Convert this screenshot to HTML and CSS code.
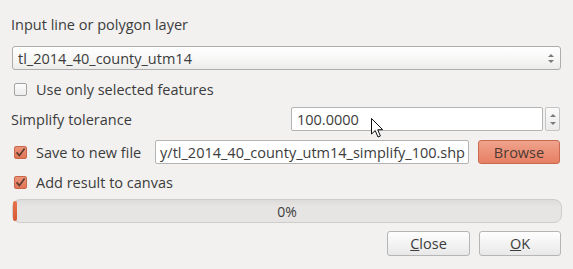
FILE: index.html
```html
<!DOCTYPE html>
<html>
<head>
<meta charset="utf-8">
<link rel="stylesheet" href="styles.css">
</head>
<body>
<div class="dialog">
  <div class="row label-row">Input line or polygon layer</div>
  <div class="combo">
    <span class="combo-text">tl_2014_40_county_utm14</span>
    <span class="arrows"><span class="up"></span><span class="down"></span></span>
  </div>
  <div class="row check-row r-use">
    <span class="cb"></span><span class="cb-label">Use only selected features</span>
  </div>
  <div class="row field-row r-tol">
    <span class="tol-label">Simplify tolerance</span>
    <div class="spin">
      <div class="spin-edit">100.0000</div>
      <div class="spin-btns"><span class="up"></span><span class="down"></span></div>
    </div>
  </div>
  <div class="row field-row r-save">
    <span class="cb checked"><svg viewBox="0 0 13 13" width="13" height="13"><path d="M2.6 6.4 L5.4 9.6 L10.6 2.6" fill="none" stroke="#5b3b31" stroke-width="1.6"/></svg></span>
    <span class="cb-label save-label">Save to new file</span>
    <div class="line-edit"><span class="path">y/tl_2014_40_county_utm14_simplify_100.shp</span></div>
    <button class="btn browse">Browse</button>
  </div>
  <div class="row check-row r-add">
    <span class="cb checked"><svg viewBox="0 0 13 13" width="13" height="13"><path d="M2.6 6.4 L5.4 9.6 L10.6 2.6" fill="none" stroke="#5b3b31" stroke-width="1.6"/></svg></span>
    <span class="cb-label">Add result to canvas</span>
  </div>
  <div class="progress"><span class="chunk"></span><span class="pct">0%</span></div>
  <div class="row buttons">
    <button class="btn plain close"><u>C</u>lose</button>
    <button class="btn plain ok"><u>O</u>K</button>
  </div>
</div>
<svg class="cursor" width="14" height="21" viewBox="0 0 14 21"><path d="M0.5 0.5 L0.5 16 L4.2 12.6 L7 19 L9.4 18 L6.7 11.8 L11.6 11.6 Z" fill="#fff" stroke="#111" stroke-width="1" stroke-linejoin="round"/></svg>
</body>
</html>
```
FILE: styles.css
```css
html, body {
  margin: 0;
  padding: 0;
  background: #f2f1f0;
}
body {
  width: 573px;
  height: 269px;
  position: relative;
  overflow: hidden;
  font-family: "Open Sans", "DejaVu Sans", sans-serif;
  font-size: 14.5px;
  color: #3c3c3c;
}
.dialog {
  display: flex;
  flex-direction: column;
  padding: 0 12px 0 11px;
}
.row {
  display: flex;
  align-items: center;
}
.label-row {
  height: 20px;
  margin-top: 14px;
}
.combo {
  margin-top: 12px;
  margin-left: 1px;
  height: 24px;
  box-sizing: border-box;
  border: 1px solid #adadad;
  border-radius: 3px;
  background: linear-gradient(#ffffff, #f6f6f5 60%, #ececeb);
  display: flex;
  align-items: center;
  padding: 0 6px 0 5px;
}
.combo-text {
  flex: 1;
}
.arrows, .spin-btns {
  display: flex;
  flex-direction: column;
  align-items: center;
  gap: 3px;
}
.up {
  width: 0;
  height: 0;
  border-left: 3px solid transparent;
  border-right: 3px solid transparent;
  border-bottom: 3px solid #7a7a7a;
}
.down {
  width: 0;
  height: 0;
  border-left: 3px solid transparent;
  border-right: 3px solid transparent;
  border-top: 3px solid #7a7a7a;
}
.check-row {
  height: 20px;
}
.r-use {
  margin-top: 9px;
}
.cb {
  width: 13px;
  height: 13px;
  box-sizing: border-box;
  border: 1px solid #a3a3a3;
  border-radius: 2px;
  background: linear-gradient(#fcfcfc, #ececec);
  margin-left: 3px;
  margin-right: 9px;
  flex-shrink: 0;
  display: flex;
}
.cb svg {
  display: block;
  margin: -1px;
}
.cb.checked {
  border-color: #c9674a;
  background: linear-gradient(#ec9479, #e07556);
}
.field-row {
  height: 24px;
}
.r-tol {
  margin-top: 8px;
}
.tol-label {
  flex: 1;
}
.spin {
  display: flex;
  height: 24px;
  gap: 2px;
}
.spin-edit {
  width: 252px;
  box-sizing: border-box;
  border: 1px solid #b4b4b4;
  border-radius: 2px;
  background: #ffffff;
  padding-left: 5px;
  display: flex;
  align-items: center;
}
.spin-btns {
  width: 15px;
  box-sizing: border-box;
  border: 1px solid #c4c4c4;
  border-radius: 2px;
  background: linear-gradient(#fafafa, #ebebeb);
  justify-content: center;
  gap: 5px;
  margin-right: 1px;
}
.r-save {
  margin-top: 9px;
}
.save-label {
  margin-right: 0;
  width: 119px;
  flex-shrink: 0;
}
.line-edit {
  width: 314px;
  flex-shrink: 0;
  height: 24px;
  box-sizing: border-box;
  border: 1px solid #b4b4b4;
  border-radius: 2px;
  background: #ffffff;
  display: flex;
  align-items: center;
  justify-content: flex-end;
  overflow: hidden;
  padding-right: 3px;
}
.path {
  white-space: nowrap;
  flex-shrink: 0;
}
.btn {
  font-family: inherit;
  font-size: 14.5px;
  color: #3c3c3c;
  height: 24px;
  box-sizing: border-box;
  border-radius: 3px;
  padding: 0;
  margin: 0;
}
.browse {
  margin-left: 9px;
  width: 82px;
  border: 1px solid #c86a50;
  background: linear-gradient(#f0a38c, #e67f63);
  color: #4d3a34;
}
.r-add {
  margin-top: 8px;
}
.progress {
  margin-top: 7px;
  height: 24px;
  box-sizing: border-box;
  border: 1px solid #cfcdcb;
  border-radius: 8px;
  background: linear-gradient(#dedcda, #e6e5e3 30%, #e6e5e3);
  display: flex;
  align-items: center;
  justify-content: center;
  position: relative;
  margin-right: -1px;
  margin-left: 1px;
}
.chunk {
  position: absolute;
  left: 0;
  top: 1px;
  bottom: 1px;
  width: 4px;
  border-radius: 2px;
  background: linear-gradient(#e8704a, #d65b35);
}
.pct {
  font-size: 14px;
}
.buttons {
  margin-top: 8px;
  justify-content: flex-end;
  gap: 9px;
}
.plain {
  width: 83px;
  height: 25px;
  border: 1px solid #b5b5b5;
  background: linear-gradient(#fefefe, #f1f1f1 60%, #e8e8e8);
}
.ok {
  width: 82px;
}
.cursor {
  position: absolute;
  left: 371px;
  top: 118px;
}
```
